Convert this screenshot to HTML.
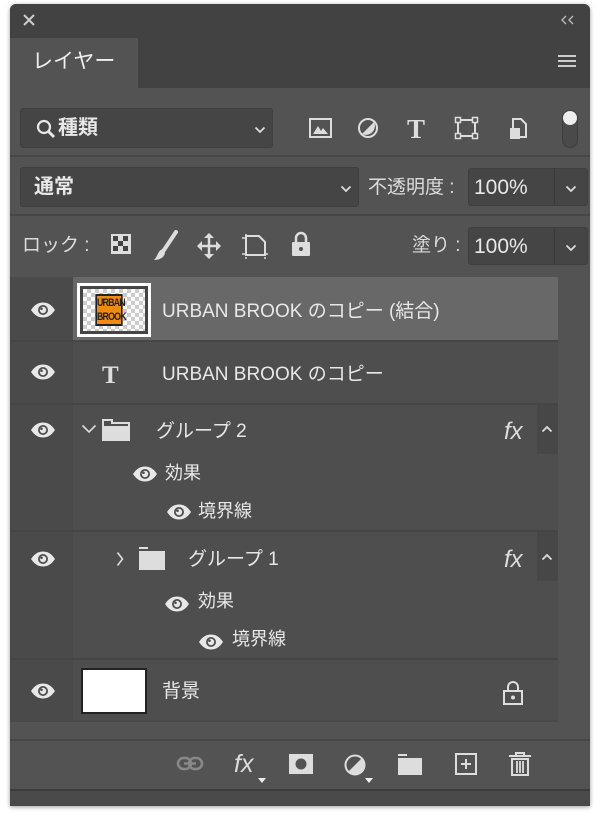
<!DOCTYPE html>
<html><head><meta charset="utf-8"><style>
*{margin:0;padding:0;box-sizing:border-box}
body{width:600px;height:821px;background:#fff;position:relative;overflow:hidden;font-family:"Liberation Sans","Noto Sans CJK JP",sans-serif;color:#e8e8e8}
.a{position:absolute}
#panel{left:10px;top:4px;width:580px;height:802px;background:#535353;border-radius:6px 6px 0 0;overflow:hidden;box-shadow:0 1px 4px rgba(0,0,0,.4)}
.fld{background:#454545;border:1px solid #3f3f3f;border-radius:3px}
.t{font-size:19px;white-space:nowrap;line-height:1}
.eye{width:26px;height:16px}
</style></head><body>
<svg width="0" height="0" style="position:absolute"><defs>
<symbol id="eye" viewBox="0 0 26 16"><path d="M1 8C5 2 9 0.5 13 0.5S21 2 25 8C21 14 17 15.5 13 15.5S5 14 1 8Z" fill="#e8e8e8"/><circle cx="13" cy="8" r="5" fill="#4e4e4e"/><circle cx="13" cy="8" r="3.2" fill="#e8e8e8"/><circle cx="11.5" cy="6.8" r="1.3" fill="#4e4e4e"/></symbol>
<symbol id="dn" viewBox="0 0 12 8"><path d="M1.5 1.5L6 6L10.5 1.5" fill="none" stroke="#ddd" stroke-width="1.8"/></symbol>
<symbol id="up" viewBox="0 0 12 8"><path d="M1.5 6.5L6 2L10.5 6.5" fill="none" stroke="#ddd" stroke-width="1.8"/></symbol>
</defs></svg>
<div id="panel" class="a">
 <div class="a" style="left:0;top:0;width:580px;height:84px;background:#424242"></div>
 <svg class="a" style="left:13px;top:10px" width="12" height="12"><path d="M1 1L11 11M11 1L1 11" stroke="#ccc" stroke-width="2"/></svg>
 <svg class="a" style="left:551px;top:11px" width="14" height="10"><path d="M5 1L1 5L5 9M12 1L8 5L12 9" fill="none" stroke="#bbb" stroke-width="1.3"/></svg>
 <div class="a" style="left:0;top:34px;width:128px;height:54px;background:#535353"></div>
 <div class="a t" style="left:22px;top:47px;font-size:21px;color:#eee">レイヤー</div>
 <div class="a" style="left:548px;top:51px;width:18px;height:12px;border-top:2px solid #ccc;border-bottom:2px solid #ccc"><div style="margin-top:3px;border-top:2px solid #ccc"></div></div>
 <!-- filter row -->
 <div class="a fld" style="left:10px;top:104px;width:253px;height:40px"></div>
 <svg class="a" style="left:26px;top:115px" width="20" height="20"><circle cx="8" cy="8" r="6" stroke="#e8e8e8" stroke-width="2.2" fill="none"/><path d="M12 12L18 18" stroke="#e8e8e8" stroke-width="3"/></svg>
 <div class="a t" style="left:48px;top:114px;font-size:20px;font-weight:bold">種類</div>
 <svg class="a" style="left:244px;top:122px" width="12" height="8"><use href="#dn"/></svg>
 <svg class="a" style="left:298px;top:112px" width="26" height="24"><rect x="2" y="3" width="21" height="18" fill="none" stroke="#ddd" stroke-width="2"/><path d="M5 18L10 10L13 15L15 12L20 18Z" fill="#ddd"/></svg>
 <svg class="a" style="left:346px;top:112px" width="24" height="24"><circle cx="12" cy="12" r="9" fill="none" stroke="#ddd" stroke-width="2"/><path d="M18 6A9 9 0 0 1 6 18Z" fill="#ddd"/></svg>
 <div class="a t" style="left:397px;top:112px;font-family:'Liberation Serif',serif;font-size:27px;font-weight:bold;color:#ddd">T</div>
 <svg class="a" style="left:444px;top:112px" width="26" height="24"><rect x="4" y="4" width="17" height="16" fill="none" stroke="#ddd" stroke-width="2"/><g fill="#535353" stroke="#ddd" stroke-width="1.5"><rect x="1.5" y="1.5" width="5" height="5"/><rect x="18.5" y="1.5" width="5" height="5"/><rect x="1.5" y="17.5" width="5" height="5"/><rect x="18.5" y="17.5" width="5" height="5"/></g></svg>
 <svg class="a" style="left:496px;top:112px" width="24" height="24"><path d="M7 3H15L20 8V21H7Z" fill="none" stroke="#ddd" stroke-width="2"/><rect x="4" y="12" width="10" height="11" fill="#ddd"/></svg>
 <div class="a" style="left:552px;top:106px;width:16px;height:38px;border-radius:8px;border:1px solid #3d3d3d;background:#4a4a4a"></div>
 <div class="a" style="left:553px;top:107px;width:14px;height:14px;border-radius:7px;background:#eee"></div>
 <div class="a" style="left:0;top:151px;width:580px;height:2px;background:#474747"></div>
 <!-- blend row -->
 <div class="a fld" style="left:10px;top:163px;width:339px;height:40px"></div>
 <div class="a t" style="left:24px;top:173px;font-size:20px;font-weight:bold">通常</div>
 <svg class="a" style="left:330px;top:181px" width="12" height="8"><use href="#dn"/></svg>
 <div class="a t" style="left:358px;top:174px;font-size:19px;color:#ddd">不透明度 :</div>
 <div class="a fld" style="left:458px;top:164px;width:120px;height:38px"></div>
 <div class="a" style="left:544px;top:165px;width:1px;height:36px;background:#3a3a3a"></div>
 <div class="a t" style="left:464px;top:173px;font-size:21px">100%</div>
 <svg class="a" style="left:555px;top:181px" width="12" height="8"><use href="#dn"/></svg>
 <div class="a" style="left:0;top:210px;width:580px;height:2px;background:#474747"></div>
 <!-- lock row -->
 <div class="a t" style="left:12px;top:232px;font-size:19px;color:#ddd">ロック :</div>
 <svg class="a" style="left:100px;top:229px" width="22" height="22"><rect x="1" y="1" width="20" height="20" fill="#ddd"/><g fill="#444"><rect x="3" y="3" width="5" height="5"/><rect x="13" y="3" width="5" height="5"/><rect x="8" y="8" width="5" height="5"/><rect x="3" y="13" width="5" height="5"/><rect x="13" y="13" width="5" height="5"/></g></svg>
 <svg class="a" style="left:142px;top:226px" width="26" height="32"><path d="M24 2L12 20" stroke="#ddd" stroke-width="4" stroke-linecap="round"/><path d="M11 19C6 20 6 26 2 30C8 30 13 27 13 22Z" fill="#ddd"/></svg>
 <svg class="a" style="left:186px;top:228px" width="26" height="28"><path d="M13 2V26M2 14H24" stroke="#ddd" stroke-width="2.5"/><path d="M13 1L8 6H18ZM13 27L8 22H18ZM1 14L6 9V19ZM25 14L20 9V19Z" fill="#ddd"/></svg>
 <svg class="a" style="left:231px;top:229px" width="28" height="26"><path d="M5 3V22H24V9L18 3Z" fill="none" stroke="#ddd" stroke-width="2"/><path d="M1 5H4M1 21H4M25 21H27M5 24V26M24 24V26M5 1V2" stroke="#ddd" stroke-width="1.5"/></svg>
 <svg class="a" style="left:280px;top:227px" width="22" height="26"><path d="M6 11V7A5 5 0 0 1 16 7V11" fill="none" stroke="#ddd" stroke-width="2.5"/><rect x="2" y="11" width="18" height="14" rx="1" fill="#ddd"/><circle cx="11" cy="18" r="2" fill="#535353"/></svg>
 <div class="a t" style="left:402px;top:232px;font-size:19px;color:#ddd">塗り :</div>
 <div class="a fld" style="left:458px;top:223px;width:120px;height:38px"></div>
 <div class="a" style="left:544px;top:224px;width:1px;height:36px;background:#3a3a3a"></div>
 <div class="a t" style="left:464px;top:232px;font-size:21px">100%</div>
 <svg class="a" style="left:555px;top:240px" width="12" height="8"><use href="#dn"/></svg>
 <!-- layers list -->
 <div class="a" style="left:0;top:273px;width:548px;height:443px;background:#4e4e4e"></div>
 <div class="a" style="left:0;top:273px;width:63px;height:443px;background:#4a4a4a"></div>
 <div class="a" style="left:63px;top:273px;width:485px;height:63px;background:#686868"></div>
 <div class="a" style="left:0;top:336px;width:548px;height:2px;background:#454545"></div>
 <div class="a" style="left:0;top:399px;width:548px;height:2px;background:#454545"></div>
 <div class="a" style="left:0;top:526px;width:548px;height:2px;background:#454545"></div>
 <div class="a" style="left:0;top:654px;width:548px;height:2px;background:#454545"></div>
 <div class="a" style="left:0;top:716px;width:548px;height:2px;background:#494949"></div>
 <!-- row1 -->
 <svg class="a eye" style="left:20px;top:298px"><use href="#eye"/></svg>
 <div class="a" style="left:67px;top:279px;width:74px;height:54px;background:#fff;padding:3px"><div style="width:100%;height:100%;background:#444;padding:3px"><div style="width:100%;height:100%;background:repeating-conic-gradient(#ccc 0 25%,#fff 0 50%) 0 0/8px 8px;position:relative"><div style="position:absolute;left:9px;top:5px;width:34px;height:32px;background:#f08a10;border:2px solid #222;font:bold 11px/14px 'Liberation Sans',sans-serif;color:#222;text-align:center;letter-spacing:-1px;transform:scaleX(.8)">URBAN<br>BROOK</div></div></div></div>
 <div class="a t" style="left:152px;top:298px">URBAN BROOK のコピー (結合)</div>
 <!-- row2 -->
 <svg class="a eye" style="left:20px;top:360px"><use href="#eye"/></svg>
 <div class="a t" style="left:92px;top:359px;font-family:'Liberation Serif',serif;font-size:25px;font-weight:bold;color:#ddd">T</div>
 <div class="a t" style="left:152px;top:361px">URBAN BROOK のコピー</div>
 <!-- group2 -->
 <div class="a" style="left:527px;top:401px;width:21px;height:49px;background:#474747"></div>
 <svg class="a eye" style="left:20px;top:418px"><use href="#eye"/></svg>
 <svg class="a" style="left:71px;top:420px" width="16" height="10"><path d="M1.5 1.5L8 8L14.5 1.5" fill="none" stroke="#ddd" stroke-width="1.6"/></svg>
 <svg class="a" style="left:92px;top:415px" width="28" height="22"><path d="M1 1H10V4H27V21H1Z" fill="none" stroke="#ddd" stroke-width="2"/><rect x="1" y="7" width="26" height="14" fill="#ddd"/></svg>
 <div class="a t" style="left:146px;top:418px">グループ 2</div>
 <div class="a t" style="left:494px;top:416px;font-size:24px;font-style:italic;color:#ddd">fx</div>
 <svg class="a" style="left:531px;top:421px" width="12" height="8"><use href="#up"/></svg>
 <svg class="a eye" style="left:122px;top:462px"><use href="#eye"/></svg>
 <div class="a t" style="left:155px;top:460px;font-size:18px">効果</div>
 <svg class="a eye" style="left:156px;top:500px"><use href="#eye"/></svg>
 <div class="a t" style="left:188px;top:498px;font-size:18px">境界線</div>
 <!-- group1 -->
 <div class="a" style="left:527px;top:528px;width:21px;height:49px;background:#474747"></div>
 <svg class="a eye" style="left:20px;top:547px"><use href="#eye"/></svg>
 <svg class="a" style="left:106px;top:547px" width="8" height="16"><path d="M1.5 1.5L6.5 8L1.5 14.5" fill="none" stroke="#ddd" stroke-width="1.6"/></svg>
 <svg class="a" style="left:128px;top:543px" width="28" height="24"><path d="M1 1H10" stroke="#ddd" stroke-width="2"/><rect x="1" y="4" width="26" height="19" fill="#ddd"/></svg>
 <div class="a t" style="left:178px;top:546px">グループ 1</div>
 <div class="a t" style="left:494px;top:544px;font-size:24px;font-style:italic;color:#ddd">fx</div>
 <svg class="a" style="left:531px;top:549px" width="12" height="8"><use href="#up"/></svg>
 <svg class="a eye" style="left:154px;top:592px"><use href="#eye"/></svg>
 <div class="a t" style="left:188px;top:588px;font-size:18px">効果</div>
 <svg class="a eye" style="left:188px;top:630px"><use href="#eye"/></svg>
 <div class="a t" style="left:222px;top:626px;font-size:18px">境界線</div>
 <!-- background -->
 <svg class="a eye" style="left:20px;top:679px"><use href="#eye"/></svg>
 <div class="a" style="left:71px;top:664px;width:66px;height:46px;background:#fff;border:2px solid #222"></div>
 <div class="a t" style="left:152px;top:678px">背景</div>
 <svg class="a" style="left:492px;top:676px" width="22" height="26"><path d="M6 11V7A5 5 0 0 1 16 7V11" fill="none" stroke="#ddd" stroke-width="2"/><rect x="2" y="11" width="18" height="13" fill="none" stroke="#ddd" stroke-width="2"/><circle cx="11" cy="17.5" r="2" fill="#ddd"/></svg>
 <!-- toolbar -->
 <div class="a" style="left:0;top:735px;width:580px;height:2px;background:#474747"></div>
 <div class="a" style="left:0;top:785px;width:580px;height:17px;background:#4a4a4a;border-top:2px solid #3c3c3c"></div>
 <svg class="a" style="left:166px;top:750px" width="30" height="20"><rect x="2" y="4" width="13" height="11" rx="5.5" fill="none" stroke="#888" stroke-width="2.5"/><rect x="13" y="4" width="13" height="11" rx="5.5" fill="none" stroke="#888" stroke-width="2.5"/><path d="M8 9.5H20" stroke="#888" stroke-width="2.5"/></svg>
 <div class="a t" style="left:224px;top:748px;font-size:25px;font-style:italic;color:#ddd">fx</div>
 <div class="a" style="left:248px;top:774px;border:4px solid transparent;border-top:5px solid #eee"></div>
 <svg class="a" style="left:278px;top:749px" width="26" height="22"><rect x="1" y="1" width="24" height="20" fill="#ddd"/><circle cx="13" cy="11" r="5.5" fill="#535353"/></svg>
 <svg class="a" style="left:333px;top:749px" width="24" height="24"><circle cx="12" cy="12" r="9.5" fill="none" stroke="#ddd" stroke-width="2"/><path d="M19 5A9.5 9.5 0 0 1 5 19Z" fill="#ddd"/></svg>
 <div class="a" style="left:355px;top:774px;border:4px solid transparent;border-top:5px solid #eee"></div>
 <svg class="a" style="left:387px;top:750px" width="26" height="22"><path d="M1 1H10" stroke="#ddd" stroke-width="2"/><rect x="1" y="4" width="24" height="17" fill="#ddd"/></svg>
 <svg class="a" style="left:444px;top:748px" width="24" height="24"><rect x="2" y="2" width="20" height="20" fill="none" stroke="#ddd" stroke-width="2"/><path d="M12 7V17M7 12H17" stroke="#ddd" stroke-width="2"/></svg>
 <svg class="a" style="left:498px;top:747px" width="24" height="26"><path d="M1 5H23M8 5V2H16V5" fill="none" stroke="#ddd" stroke-width="2"/><path d="M4 8H20V24H4Z" fill="none" stroke="#ddd" stroke-width="2"/><path d="M9 10V22M12 10V22M15 10V22" stroke="#ddd" stroke-width="1.8"/></svg>
</div>
</body></html>
